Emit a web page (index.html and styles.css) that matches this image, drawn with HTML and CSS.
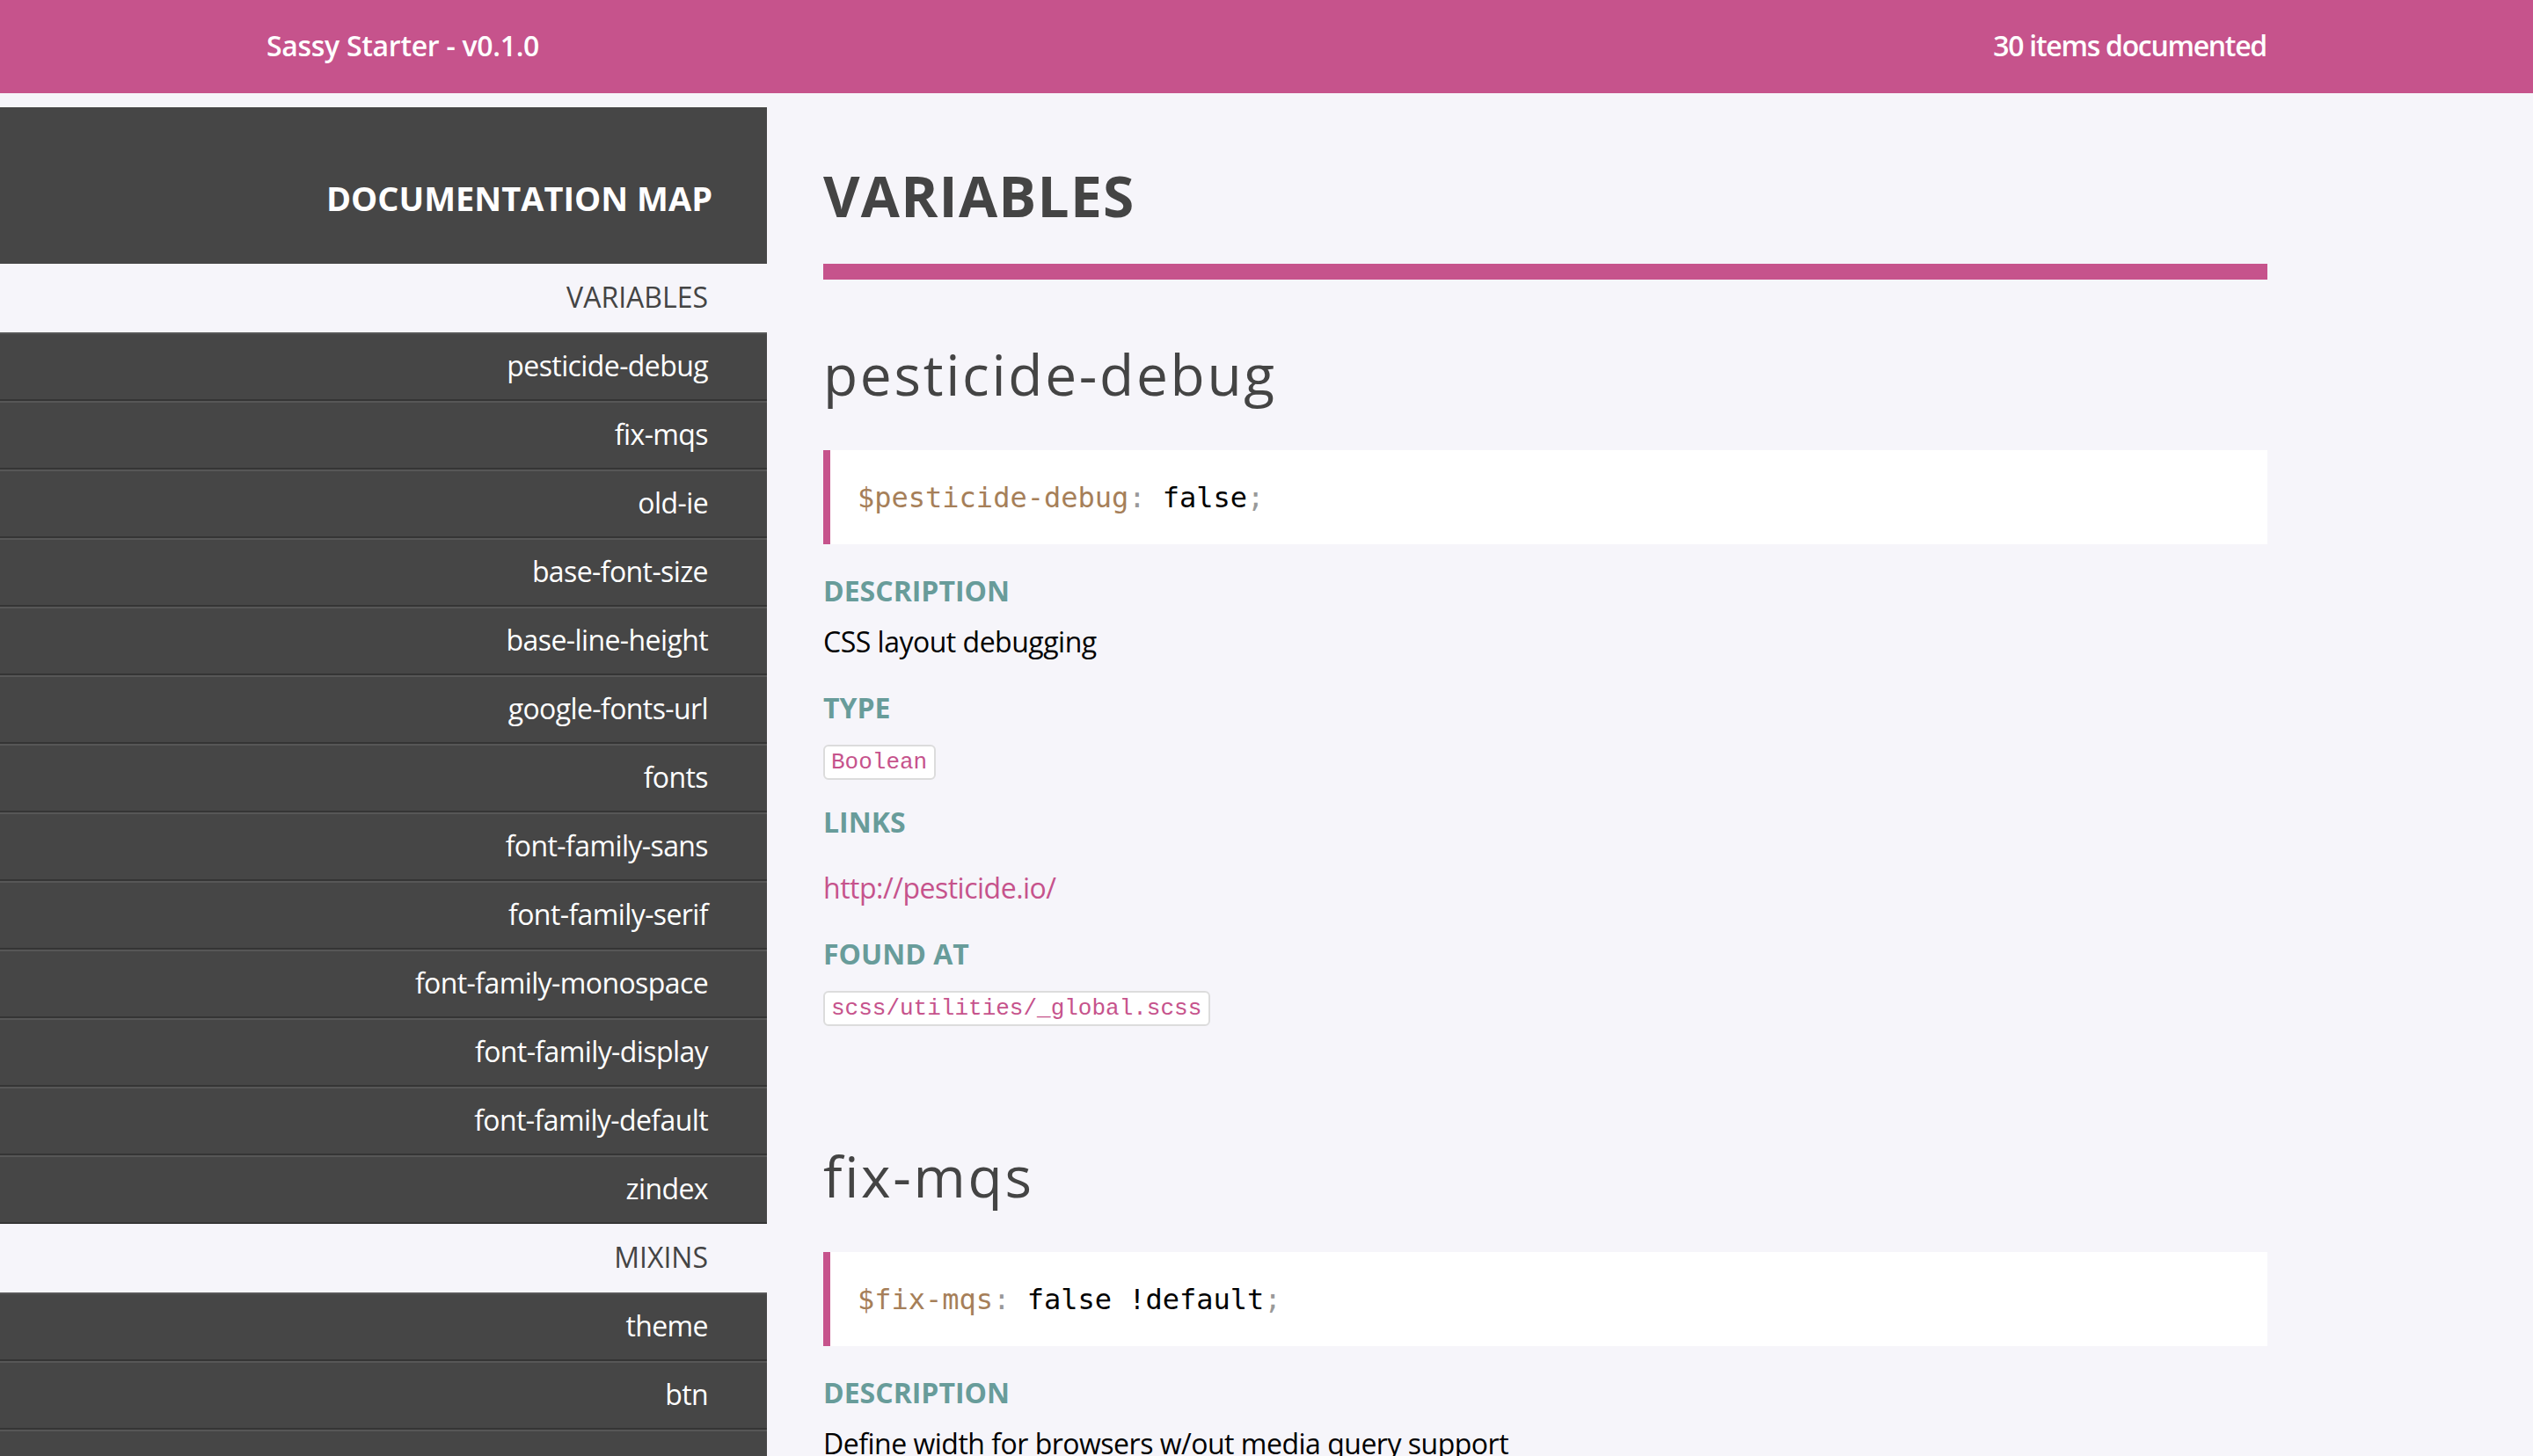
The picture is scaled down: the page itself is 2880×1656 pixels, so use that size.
FILE: index.html
```html
<!DOCTYPE html>
<html lang="en">
<head>
<meta charset="utf-8">
<title>Sassy Starter - v0.1.0</title>
<link rel="stylesheet" href="styles.css">
</head>
<body>
<header class="topbar">
  <div class="topbar-inner">
    <span class="brand">Sassy Starter - v0.1.0</span>
    <span class="count">30 items documented</span>
  </div>
</header>
<div class="layout">
  <nav class="sidebar">
    <div class="sidebar-title">DOCUMENTATION MAP</div>
    <ul class="nav-list">
      <li class="nav-group">VARIABLES</li>
      <li class="nav-item">pesticide-debug</li>
      <li class="nav-item">fix-mqs</li>
      <li class="nav-item">old-ie</li>
      <li class="nav-item">base-font-size</li>
      <li class="nav-item">base-line-height</li>
      <li class="nav-item">google-fonts-url</li>
      <li class="nav-item">fonts</li>
      <li class="nav-item">font-family-sans</li>
      <li class="nav-item">font-family-serif</li>
      <li class="nav-item">font-family-monospace</li>
      <li class="nav-item">font-family-display</li>
      <li class="nav-item">font-family-default</li>
      <li class="nav-item">zindex</li>
      <li class="nav-group">MIXINS</li>
      <li class="nav-item">theme</li>
      <li class="nav-item">btn</li>
      <li class="nav-item">mq</li>
    </ul>
  </nav>
  <main class="main">
    <h1 class="section-title">VARIABLES</h1>
    <section class="item">
      <h2 class="item-name">pesticide-debug</h2>
      <pre class="code"><span class="c-var">$pesticide-debug</span><span class="c-punc">:</span> false<span class="c-punc">;</span></pre>
      <h3 class="label">DESCRIPTION</h3>
      <p class="text">CSS layout debugging</p>
      <h3 class="label">TYPE</h3>
      <code class="tag">Boolean</code>
      <h3 class="label">LINKS</h3>
      <p class="text link-line"><a class="link" href="#">http://pesticide.io/</a></p>
      <h3 class="label">FOUND AT</h3>
      <code class="tag">scss/utilities/_global.scss</code>
    </section>
    <section class="item">
      <h2 class="item-name">fix-mqs</h2>
      <pre class="code"><span class="c-var">$fix-mqs</span><span class="c-punc">:</span> false !default<span class="c-punc">;</span></pre>
      <h3 class="label">DESCRIPTION</h3>
      <p class="text">Define width for browsers w/out media query support</p>
      <h3 class="label">TYPE</h3>
      <code class="tag">Boolean</code>
    </section>
  </main>
</div>
</body>
</html>
```
FILE: styles.css
```css
* { box-sizing: border-box; }
html, body { margin: 0; padding: 0; }
body {
  background: #f6f5fa;
  font-family: "Open Sans", "Noto Sans", sans-serif;
  color: #444;
  overflow: hidden;
}
.topbar {
  background: #c6538c;
  height: 106px;
  color: #fff;
}
.topbar-inner {
  width: 2274px;
  margin: 0 auto;
  height: 100%;
  display: flex;
  justify-content: space-between;
  align-items: center;
  padding-bottom: 3px;
  font-size: 32px;
  font-weight: 600;
  letter-spacing: -0.3px;
}
.count {
  letter-spacing: -1.3px;
}
.layout {
  display: flex;
  margin-top: 16px;
  align-items: flex-start;
}
.sidebar {
  width: 872px;
  flex: none;
}
.sidebar-title {
  height: 178px;
  background: #464646;
  color: #fff;
  text-align: right;
  padding: 79px 62px 0 0;
  font-size: 38px;
  line-height: 48px;
  font-weight: 700;
}
.nav-list {
  list-style: none;
  margin: 0;
  padding: 0;
}
.nav-group, .nav-item {
  height: 78px;
  line-height: 72px;
  padding: 0 67px 2px 0;
  text-align: right;
  font-size: 32px;
  border-top: 2px solid transparent;
  border-bottom: 2px solid transparent;
}
.nav-group {
  color: #444;
}
.nav-item {
  background: #464646;
  color: #fff;
  border-top-color: #575757;
  border-bottom-color: #353535;
  letter-spacing: -0.6px;
}
.main {
  margin-left: 64px;
  width: 1642px;
  flex: none;
}
.section-title {
  margin: 61px 0 0;
  font-size: 64px;
  line-height: 80px;
  font-weight: 700;
  color: #444;
  letter-spacing: 1.2px;
  padding-bottom: 37px;
  border-bottom: 18px solid #c6538c;
}
.item-name {
  margin: 68px 0 0;
  font-size: 64px;
  line-height: 80px;
  font-weight: 400;
  color: #444;
  letter-spacing: 2.7px;
}
.item + .item .item-name {
  margin-top: 131px;
}
.code {
  margin: 46px 0 0;
  background: #fff;
  border-left: 8px solid #c6538c;
  padding: 33px 31px 31px;
  font-family: "DejaVu Sans Mono", monospace;
  font-size: 32px;
  line-height: 43px;
  color: #000;
}
.c-var { color: #a67f59; }
.c-punc { color: #999; }
.label {
  margin: 33px 0 0;
  font-size: 32px;
  line-height: 40px;
  font-weight: 700;
  color: #689c9a;
}
.text {
  margin: 16px 0 0;
  font-size: 32px;
  line-height: 44px;
  color: #000;
  letter-spacing: -0.5px;
}
.link-line {
  margin-top: 33px;
}
.tag {
  display: inline-block;
  margin-top: 22px;
  background: #fff;
  border: 2px solid #dcdcdc;
  border-radius: 6px;
  padding: 0 8px 0 7px;
  font-family: "Liberation Mono", monospace;
  font-size: 26px;
  line-height: 36px;
  color: #c6538c;
}
.tag + .label { margin-top: 28px; }
.link {
  color: #c6538c;
  text-decoration: none;
}
```
